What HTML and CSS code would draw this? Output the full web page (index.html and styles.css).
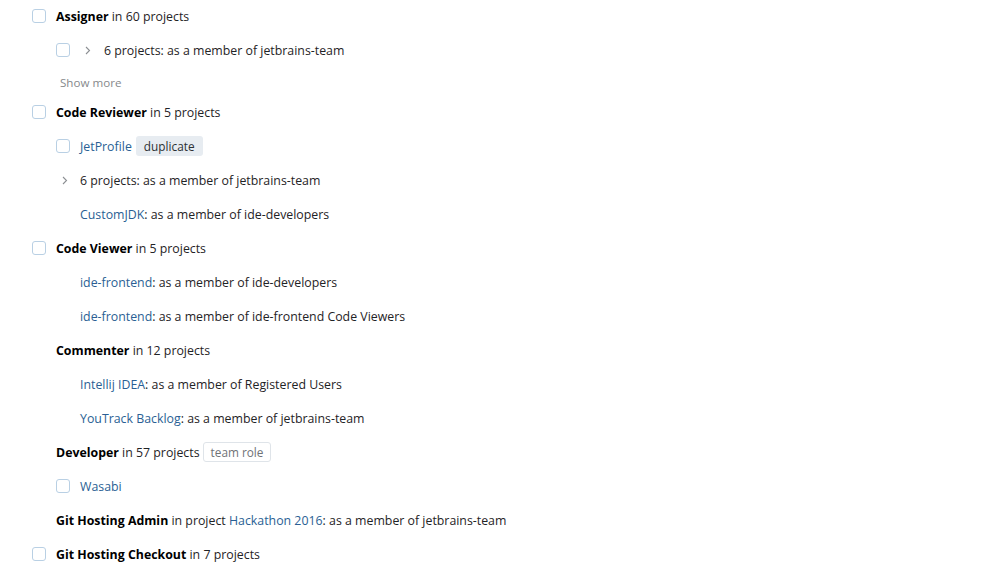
FILE: index.html
```html
<!DOCTYPE html>
<html>
<head>
<meta charset="utf-8">
<link rel="stylesheet" href="styles.css">
</head>
<body>
<div class="list">
  <div class="row lvl0"><span class="cb"></span><span class="txt"><b>Assigner</b> in 60 projects</span></div>
  <div class="row lvl1"><span class="cb"></span><span class="chev"><svg width="6" height="9" viewBox="0 0 6 9"><path d="M1 1l3.5 3.5L1 8" fill="none" stroke="#8c8f93" stroke-width="1.1"/></svg></span><span class="txt">6 projects: as a member of jetbrains-team</span></div>
  <div class="row more"><span class="showmore">Show more</span></div>
  <div class="row lvl0"><span class="cb"></span><span class="txt"><b>Code Reviewer</b> in 5 projects</span></div>
  <div class="row lvl1"><span class="cb"></span><span class="txt"><span class="link">JetProfile</span><span class="tag">duplicate</span></span></div>
  <div class="row lvl1"><span class="slot"><svg width="6" height="9" viewBox="0 0 6 9"><path d="M1 1l3.5 3.5L1 8" fill="none" stroke="#8c8f93" stroke-width="1.1"/></svg></span><span class="txt">6 projects: as a member of jetbrains-team</span></div>
  <div class="row lvl1"><span class="slot"></span><span class="txt"><span class="link">CustomJDK</span>: as a member of ide-developers</span></div>
  <div class="row lvl0"><span class="cb"></span><span class="txt"><b>Code Viewer</b> in 5 projects</span></div>
  <div class="row lvl1"><span class="slot"></span><span class="txt"><span class="link">ide-frontend</span>: as a member of ide-developers</span></div>
  <div class="row lvl1"><span class="slot"></span><span class="txt"><span class="link">ide-frontend</span>: as a member of ide-frontend Code Viewers</span></div>
  <div class="row lvl0"><span class="slot"></span><span class="txt"><b>Commenter</b> in 12 projects</span></div>
  <div class="row lvl1"><span class="slot"></span><span class="txt"><span class="link">Intellij IDEA</span>: as a member of Registered Users</span></div>
  <div class="row lvl1"><span class="slot"></span><span class="txt"><span class="link">YouTrack Backlog</span>: as a member of jetbrains-team</span></div>
  <div class="row lvl0"><span class="slot"></span><span class="txt"><b>Developer</b> in 57 projects<span class="tag outline">team role</span></span></div>
  <div class="row lvl1"><span class="cb"></span><span class="txt"><span class="link">Wasabi</span></span></div>
  <div class="row lvl0"><span class="slot"></span><span class="txt"><b>Git Hosting Admin</b> in project <span class="link">Hackathon 2016</span>: as a member of jetbrains-team</span></div>
  <div class="row lvl0"><span class="cb"></span><span class="txt"><b>Git Hosting Checkout</b> in 7 projects</span></div>
</div>
</body>
</html>
```
FILE: styles.css
```css
html, body {
  margin: 0;
  padding: 0;
  background: #fff;
}
body {
  font-family: "Open Sans", "Noto Sans", sans-serif;
  font-size: 12.35px;
  color: #1f2326;
}
.list {
  display: flex;
  flex-direction: column;
  padding-left: 32px;
  margin-top: -1px;
}
.row {
  display: flex;
  align-items: center;
  height: 34px;
  white-space: nowrap;
}
.lvl1 {
  padding-left: 24px;
}
.more {
  height: 28px;
  padding-left: 28px;
  padding-top: 2px;
  box-sizing: border-box;
}
.cb, .slot {
  flex: none;
  width: 24px;
  display: flex;
  align-items: center;
}
.cb::before {
  content: "";
  width: 12px;
  height: 12px;
  border: 1px solid #b9d0e4;
  border-radius: 3px;
  box-sizing: content-box;
}
.slot svg {
  margin-left: 6px;
}
.chev {
  flex: none;
  width: 24px;
  display: flex;
  align-items: center;
}
.chev svg {
  margin-left: 5px;
}
.txt b {
  font-weight: 700;
  color: #000;
}
.link {
  color: #2a5f94;
}
.showmore {
  font-size: 11.6px;
  color: #86898c;
}
.tag {
  display: inline-block;
  margin-left: 4px;
  padding: 2px 8px 2px;
  font-size: 11.8px;
  line-height: 16px;
  border-radius: 3px;
  background: #e7ecf1;
  color: #2c3033;
  vertical-align: 0;
}
.tag.outline {
  margin-left: 3px;
  background: #fff;
  border: 1px solid #dfe4e9;
  color: #707377;
  padding: 1px 7px 1px;
}
```
